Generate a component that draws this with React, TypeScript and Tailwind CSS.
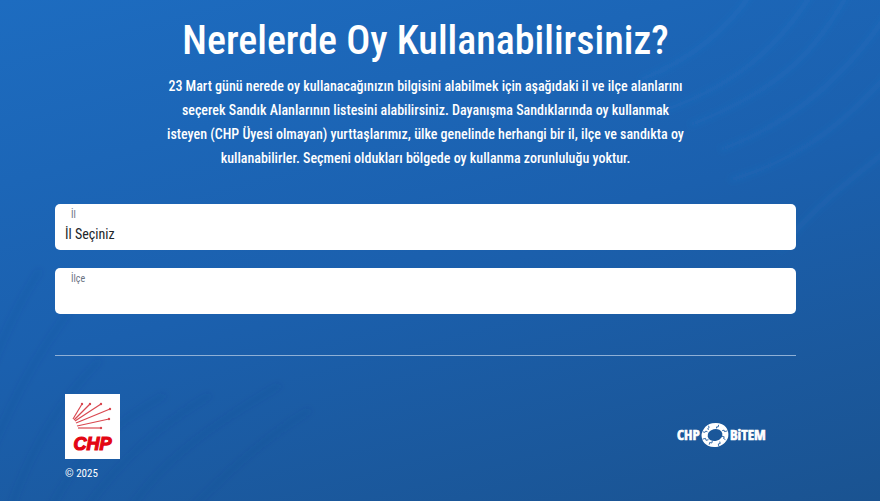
import type { ReactNode } from 'react'

interface SelectFieldProps {
  id: string
  label: string
  children?: ReactNode
}

function SelectField({ id, label, children }: SelectFieldProps) {
  return (
    <div className="flex h-[46px] flex-col rounded-[5px] bg-white">
      <label htmlFor={id} className="pt-[5px] pl-4 text-[10px] leading-3 text-gray-500">{label}</label>
      <select
        id={id}
        className="w-full flex-1 appearance-none rounded-[5px] bg-transparent px-[10px] pb-1 text-[14px] leading-5 text-[#212529]"
      >
        {children}
      </select>
    </div>
  )
}

// six arrows fanning out from the lower left corner
const arrows = [
  { x1: 8, y1: 25, x2: 17, y2: 10 },
  { x1: 9, y1: 26, x2: 25, y2: 10 },
  { x1: 10, y1: 27, x2: 36, y2: 10 },
  { x1: 11, y1: 29, x2: 45, y2: 15 },
  { x1: 12, y1: 32, x2: 44, y2: 25 },
  { x1: 13, y1: 34, x2: 36, y2: 34 },
]

function ChpLogo() {
  return (
    <svg viewBox="0 0 55 65" className="h-[65px] w-[55px]" role="img" aria-label="CHP">
      <rect width="55" height="65" fill="#fff" />
      <g stroke="#d94850" strokeWidth="1.2" fill="#d94850">
        {arrows.map(a => (
          <g key={a.x2 + '-' + a.y2}>
            <line {...a} />
            <circle cx={a.x2} cy={a.y2} r="0.6" />
          </g>
        ))}
      </g>
      <text x="27.5" y="56" textAnchor="middle" fill="#e30613" stroke="#e30613" strokeWidth="1.2" fontSize="18" fontWeight="700" fontStyle="italic" fontFamily="Liberation Sans, sans-serif">CHP</text>
    </svg>
  )
}

function BitemLogo() {
  return (
    <svg viewBox="0 0 92 26" className="h-[26px] w-[92px]" role="img" aria-label="CHP BiTEM">
      <g fill="#fff" stroke="#fff" strokeWidth="0.6" fontSize="15" fontWeight="700" fontFamily="Open Sans Condensed, Roboto Condensed, Liberation Sans Narrow, sans-serif">
        <text x="1" y="18">CHP</text>
        <text x="54" y="18">BiTEM</text>
      </g>
      <g transform="rotate(-14 39 13)" fill="none">
        <ellipse cx="39" cy="13" rx="10.5" ry="9" stroke="#fff" strokeWidth="6" />
        {/* puzzle seams between the ring's pieces */}
        <g stroke="#1b5a9f" strokeWidth="0.8">
          <path d="M26 14h3v2h2.5" />
          <path d="M31 21l1-2 2 1 1-2" />
          <path d="M40 25v-2.500h2v-2" />
          <path d="M48 20l-1.500-1.500 1-1.500-2-1" />
          <path d="M52 12h-3v-1.500h-2" />
          <path d="M45 4l-1 2-1.500-.5-.5 1.500" />
          <path d="M35 2.500v2l-1.500.5.5 1.500" />
          <path d="M28 7l2 1 1-1 1.500 1" />
        </g>
      </g>
    </svg>
  )
}

// faint diagonal ripples in two opposite corners of the page
function Waves() {
  return (
    <svg className="absolute inset-0 h-full w-full" viewBox="0 0 880 501" preserveAspectRatio="none" aria-hidden="true">
      <defs>
        <filter id="soft" x="-20%" y="-20%" width="140%" height="140%">
          <feGaussianBlur stdDeviation="3" />
        </filter>
      </defs>
      <g fill="none" stroke="#0b3f86" strokeOpacity="0.13" strokeWidth="5" filter="url(#soft)">
        <path d="M-20 400C0 340 20 300 40 270" />
        <path d="M-20 480C10 400 40 350 70 310" />
        <path d="M10 510C30 450 60 400 100 360" />
        <path d="M50 510C80 450 120 420 165 395" />
        <path d="M85 510C120 460 160 425 210 395" />
        <path d="M130 510C160 460 220 420 280 385" />
        <path d="M190 510C220 480 260 440 310 410" />
      </g>
      <g fill="none" stroke="#2f86da" strokeOpacity="0.15" strokeWidth="5" filter="url(#soft)">
        <path d="M640 80C690 60 730 30 760 -20" />
        <path d="M650 115C730 90 780 50 820 -20" />
        <path d="M690 125C780 90 820 50 855 -20" />
        <path d="M720 150C800 120 850 70 890 10" />
        <path d="M730 180C800 160 850 120 900 60" />
        <path d="M780 250C810 210 850 180 900 140" />
      </g>
    </svg>
  )
}

export default function App() {
  return (
    <div className="relative min-h-screen bg-linear-165 from-[#1d6cc0] via-[#1b60ae] to-[#1a5391] font-['Roboto_Condensed','Liberation_Sans_Narrow',Roboto,sans-serif] text-white">
      <Waves />
      <div className="relative pr-[84px] pl-[55px]">
        <main>
          <header className="mx-auto max-w-[530px] pt-4 text-center">
            <h1 className="text-[40px] leading-[50px] font-medium whitespace-nowrap">Nerelerde Oy Kullanabilirsiniz?</h1>
            <p className="mt-2 text-[14px] leading-6 font-medium">
              23 Mart günü nerede oy kullanacağınızın bilgisini alabilmek için aşağıdaki il ve ilçe alanlarını
              seçerek Sandık Alanlarının listesini alabilirsiniz. Dayanışma Sandıklarında oy kullanmak
              isteyen (CHP Üyesi olmayan) yurttaşlarımız, ülke genelinde herhangi bir il, ilçe ve sandıkta oy
              kullanabilirler. Seçmeni oldukları bölgede oy kullanma zorunluluğu yoktur.
            </p>
          </header>

          <form className="mt-[34px] flex flex-col gap-[18px]">
            <SelectField id="il" label="İl">
              <option>İl Seçiniz</option>
            </SelectField>
            <SelectField id="ilce" label="İlçe" />
          </form>
        </main>

        <footer className="mt-[41px] flex items-start justify-between border-t border-[#8fb0d6] pt-[38px] pr-7 pl-[10px]">
          <div>
            <ChpLogo />
            <p className="mt-[5px] text-[11px] leading-5">© 2025</p>
          </div>
          <div className="pt-7">
            <BitemLogo />
          </div>
        </footer>
      </div>
    </div>
  )
}
